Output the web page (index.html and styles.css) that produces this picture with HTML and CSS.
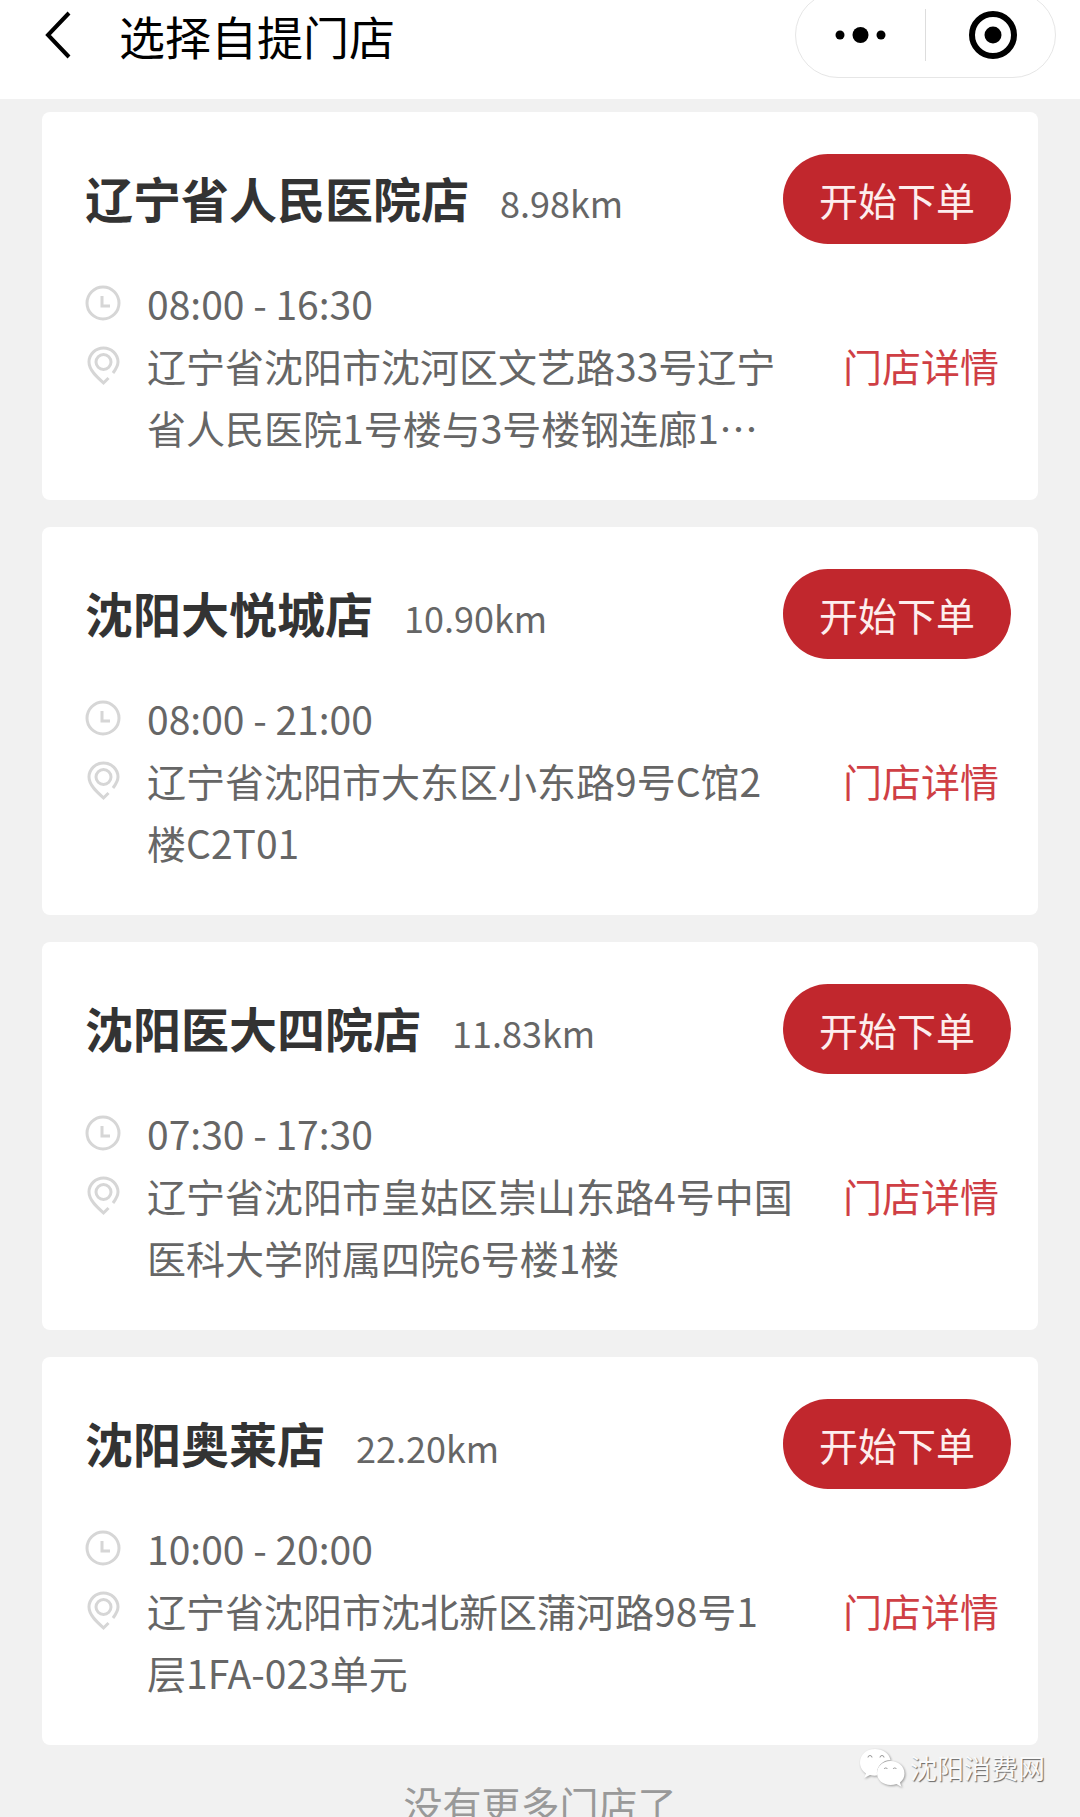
FILE: index.html
```html
<!DOCTYPE html>
<html lang="zh-CN">

<head>
    <meta charset="UTF-8">
    <meta name="viewport" content="width=device-width, initial-scale=1.0">
    <title>选择自提门店</title>
    <link rel="stylesheet" href="styles.css">
</head>

<body>
    <header class="navbar">
        <button type="button" class="back" aria-label="返回">
            <svg width="26" height="50" viewBox="0 0 26 50" fill="none" stroke="#000" stroke-width="4">
                <path d="M24 3L3 25l21 22" />
            </svg>
        </button>
        <h1 class="navbar-title">选择自提门店</h1>
        <div class="capsule">
            <button type="button" class="capsule-btn" aria-label="更多">
                <svg width="52" height="52" viewBox="0 0 52 52">
                    <circle cx="5" cy="26" r="4.500" />
                    <circle cx="25.500" cy="26" r="8" />
                    <circle cx="46" cy="26" r="4.500" />
                </svg>
            </button>
            <button type="button" class="capsule-btn" aria-label="关闭">
                <svg width="52" height="52" viewBox="0 0 52 52">
                    <circle cx="28" cy="26" r="21" fill="none" stroke="#000" stroke-width="6" />
                    <circle cx="28" cy="26" r="8.500" />
                </svg>
            </button>
        </div>
    </header>

    <!-- shared icons -->
    <svg class="sprite" aria-hidden="true">
        <symbol id="icon-clock" viewBox="0 0 36 62">
            <circle cx="18" cy="31" r="16" />
            <path d="M17 24v10h8" />
        </symbol>
        <symbol id="icon-pin" viewBox="0 0 36 62">
            <path d="M28 39C31 35 33 31 33 28a14.500 14 0 0 0-29 0c0 8 8 15 14.500 21l5-5" />
            <circle cx="18.500" cy="28" r="7.500" />
        </symbol>
    </svg>

    <main class="store-list">
        <section class="store">
            <div class="store-head">
                <div class="store-title">
                    <h2 class="store-name">辽宁省人民医院店</h2>
                    <span class="distance">8.98km</span>
                </div>
                <button type="button" class="order-btn">开始下单</button>
            </div>
            <div class="row">
                <svg class="icon"><use href="#icon-clock" /></svg>
                <p class="text">08:00 - 16:30</p>
            </div>
            <div class="row">
                <svg class="icon"><use href="#icon-pin" /></svg>
                <p class="text">辽宁省沈阳市沈河区文艺路33号辽宁省人民医院1号楼与3号楼钢连廊1…</p>
                <a class="detail" href="#">门店详情</a>
            </div>
        </section>

        <section class="store">
            <div class="store-head">
                <div class="store-title">
                    <h2 class="store-name">沈阳大悦城店</h2>
                    <span class="distance">10.90km</span>
                </div>
                <button type="button" class="order-btn">开始下单</button>
            </div>
            <div class="row">
                <svg class="icon"><use href="#icon-clock" /></svg>
                <p class="text">08:00 - 21:00</p>
            </div>
            <div class="row">
                <svg class="icon"><use href="#icon-pin" /></svg>
                <p class="text">辽宁省沈阳市大东区小东路9号C馆2楼C2T01</p>
                <a class="detail" href="#">门店详情</a>
            </div>
        </section>

        <section class="store">
            <div class="store-head">
                <div class="store-title">
                    <h2 class="store-name">沈阳医大四院店</h2>
                    <span class="distance">11.83km</span>
                </div>
                <button type="button" class="order-btn">开始下单</button>
            </div>
            <div class="row">
                <svg class="icon"><use href="#icon-clock" /></svg>
                <p class="text">07:30 - 17:30</p>
            </div>
            <div class="row">
                <svg class="icon"><use href="#icon-pin" /></svg>
                <p class="text">辽宁省沈阳市皇姑区崇山东路4号中国医科大学附属四院6号楼1楼</p>
                <a class="detail" href="#">门店详情</a>
            </div>
        </section>

        <section class="store">
            <div class="store-head">
                <div class="store-title">
                    <h2 class="store-name">沈阳奥莱店</h2>
                    <span class="distance">22.20km</span>
                </div>
                <button type="button" class="order-btn">开始下单</button>
            </div>
            <div class="row">
                <svg class="icon"><use href="#icon-clock" /></svg>
                <p class="text">10:00 - 20:00</p>
            </div>
            <div class="row">
                <svg class="icon"><use href="#icon-pin" /></svg>
                <p class="text">辽宁省沈阳市沈北新区蒲河路98号1层1FA-023单元</p>
                <a class="detail" href="#">门店详情</a>
            </div>
        </section>

        <p class="no-more">没有更多门店了</p>
    </main>

    <div class="watermark">
        <svg class="wechat" width="46" height="40" viewBox="0 0 46 40">
            <path d="M16 1C7 1 1 7 1 14.500c0 5 2.500 8.500 6 11L5 30l6-3c2 .6 5 .8 7 .5C17 18 24 12 31.500 12 30 5 24 1 16 1z" />
            <path d="M31.500 13C24 13 18 18 18 25s6 12 13.500 12c2 0 4-.4 6-1l5 3-1.500-4.500c3-2.500 4.500-5.500 4.500-9C45.500 18 39 13 31.500 13z" />
            <g class="eyes">
                <path d="M9 9.500a2 2 0 0 1 4 0M21 9.500a2 2 0 0 1 4 0M25 21a2 2 0 0 1 3.500 0M34 21a2 2 0 0 1 3.500 0" />
            </g>
        </svg>
        <span>沈阳消费网</span>
    </div>
</body>

</html>
```

FILE: styles.css
```css
* {
    box-sizing: border-box;
}

body {
    position: relative;
    height: 100vh;
    margin: 0;
    overflow: hidden;
    background-color: #f1f1f1;
    color: #666;
    font-family: "Noto Sans CJK SC", sans-serif;
    font-size: 39px;
    line-height: 62px;
}

h1,
h2,
p {
    margin: 0;
}

button {
    padding: 0;
    border: none;
    background: none;
    font-family: inherit;
    font-size: inherit;
    cursor: pointer;
}

svg {
    display: block;
}

.sprite {
    display: none;
}

/* top bar */
.navbar {
    display: flex;
    align-items: center;
    height: 99px;
    padding: 0 24px 29px 45px;
    overflow: hidden;
    background-color: #fff;
}

.back {
    margin-right: 48px;
}

.navbar-title {
    color: #000;
    font-size: 46px;
    font-weight: 400;
}

.capsule {
    display: flex;
    flex-shrink: 0;
    align-items: center;
    width: 261px;
    height: 86px;
    margin-left: auto;
    border: 1px solid #e6e6e6;
    border-radius: 43px;
}

.capsule-btn {
    display: flex;
    flex: 1;
    align-items: center;
    justify-content: center;
    height: 52px;
}

.capsule-btn + .capsule-btn {
    border-left: 1px solid #ddd;
}

/* stores */
.store-list {
    display: flex;
    flex-direction: column;
    gap: 27px;
    padding: 13px 42px 0;
}

.store {
    padding: 42px 27px 42px 43px;
    border-radius: 8px;
    background-color: #fff;
}

.store-head {
    display: flex;
    align-items: center;
    justify-content: space-between;
    margin-bottom: 28px;
}

.store-title {
    display: flex;
    align-items: baseline;
    gap: 31px;
}

.store-name {
    color: #333;
    font-size: 48px;
    font-weight: 700;
}

.distance {
    font-size: 36px;
}

.order-btn {
    width: 228px;
    height: 90px;
    border-radius: 45px;
    background-color: #c1272d;
    color: #fdeeee;
}

.row {
    display: flex;
    align-items: flex-start;
}

.icon {
    flex-shrink: 0;
    width: 36px;
    height: 62px;
    margin-right: 26px;
    fill: none;
    stroke: #d6d6d6;
    stroke-width: 3;
}

.text {
    flex: 1;
}

.detail {
    margin: 0 12px 0 48px;
    color: #cf3f45;
    text-decoration: none;
}

.no-more {
    color: #999;
    text-align: center;
}

/* account mark over the page */
.watermark {
    position: absolute;
    right: 35px;
    bottom: 29px;
    display: flex;
    align-items: center;
    gap: 5px;
    color: #fafafa;
    font-size: 27px;
    line-height: 40px;
    text-shadow: 1px 1px 1px #666;
}

.wechat {
    fill: #fff;
    filter: drop-shadow(1px 1px 1px #999);
}

.eyes {
    fill: none;
    stroke: #999;
}
```
